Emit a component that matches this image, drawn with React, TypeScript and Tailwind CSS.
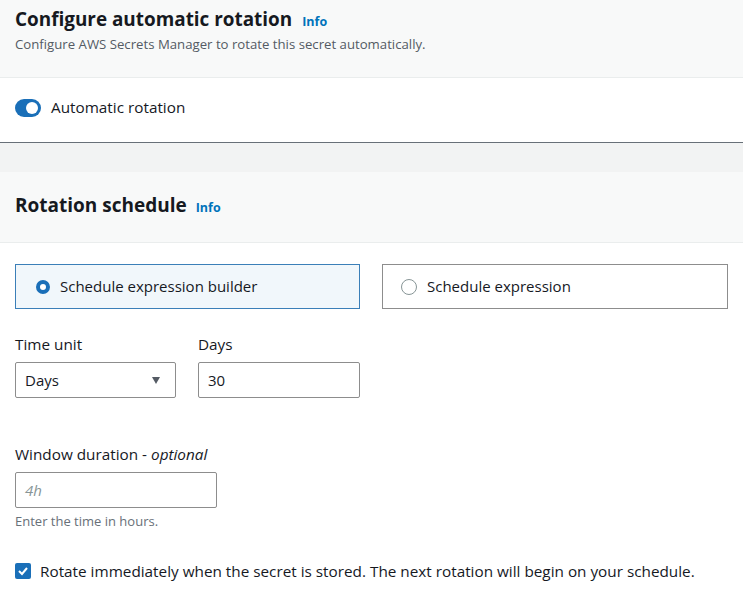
import React from "react";

function Toggle() {
  return (
    <div className="relative h-[18px] w-[26px] rounded-full bg-[#1a6fb8]">
      <div className="absolute right-[3px] top-[3px] h-[12px] w-[12px] rounded-full bg-white" />
    </div>
  );
}

export default function App() {
  return (
    <div className="w-[743px] h-[592px] overflow-hidden bg-white text-[#16191f]" style={{ fontFamily: '"Open Sans", "Noto Sans", sans-serif' }}>
      <div className="h-[78px] bg-[#f8f9f9] border-b border-[#eaeded] px-[15px] pt-[4px]">
        <div className="flex items-baseline gap-[10px]">
          <span className="text-[18.9px] font-bold leading-[30px]">Configure automatic rotation</span>
          <span className="text-[12.5px] font-bold text-[#0073bb]">Info</span>
        </div>
        <div className="text-[13.2px] text-[#545b64] leading-[20px]">Configure AWS Secrets Manager to rotate this secret automatically.</div>
      </div>
      <div className="h-[65px] bg-white flex items-center gap-[10px] px-[15px] pb-[5px] border-b border-[#687078]">
        <Toggle />
        <span className="text-[15.3px]">Automatic rotation</span>
      </div>
      <div className="h-[29px] bg-[#f2f3f3]" />
      <div className="h-[71px] bg-[#f8f9f9] border-b border-[#eaeded] px-[15px] flex items-center">
        <div className="flex items-baseline gap-[9px] pb-[4px]">
          <span className="text-[19px] font-bold">Rotation schedule</span>
          <span className="text-[12.5px] font-bold text-[#0073bb]">Info</span>
        </div>
      </div>
      <div className="px-[15px] pt-[21px]">
        <div className="flex gap-[22px]">
          <div className="w-[345px] h-[45px] border border-[#3b7fb8] bg-[#f1f7fb] flex items-center gap-[10px] px-[20px]">
            <div className="h-[14px] w-[14px] rounded-full border-[4px] border-[#1a6fb8] bg-white" />
            <span className="text-[15px]">Schedule expression builder</span>
          </div>
          <div className="w-[346px] h-[45px] border border-[#8d8d8d] bg-white flex items-center gap-[10px] px-[18px]">
            <div className="h-[16px] w-[16px] rounded-full border border-[#879596] bg-white" />
            <span className="text-[15px]">Schedule expression</span>
          </div>
        </div>
        <div className="flex gap-[22px] mt-[26px]">
          <div className="w-[161px]">
            <div className="text-[15.3px] leading-[18px]">Time unit</div>
            <div className="mt-[9px] h-[36px] border border-[#8d8d8d] rounded-[2px] flex items-center justify-between pl-[9px] pr-[15px]">
              <span className="text-[15px]">Days</span>
              <svg width="8" height="7" viewBox="0 0 8 7"><path d="M0 0 L8 0 L4 7 Z" fill="#545b64" /></svg>
            </div>
          </div>
          <div className="w-[162px]">
            <div className="text-[15.3px] leading-[18px]">Days</div>
            <div className="mt-[9px] h-[36px] border border-[#8d8d8d] rounded-[2px] flex items-center pl-[9px]">
              <span className="text-[15px]">30</span>
            </div>
          </div>
        </div>
        <div className="mt-[47px] text-[15.3px] leading-[18px]">Window duration - <i>optional</i></div>
        <div className="mt-[9px] w-[202px] h-[36px] border border-[#8d8d8d] rounded-[2px] flex items-center pl-[9px]">
          <span className="text-[15px] italic text-[#879596]">4h</span>
        </div>
        <div className="mt-[4px] text-[13px] text-[#687078]">Enter the time in hours.</div>
        <div className="mt-[28px] flex items-center gap-[9px]">
          <div className="h-[16px] w-[16px] rounded-[2px] bg-[#1a6fb8] flex items-center justify-center">
            <svg width="12" height="12" viewBox="0 0 12 12"><path d="M2 6 L5 9 L10 3" stroke="white" strokeWidth="2" fill="none" /></svg>
          </div>
          <span className="text-[15.3px]">Rotate immediately when the secret is stored. The next rotation will begin on your schedule.</span>
        </div>
      </div>
    </div>
  );
}
